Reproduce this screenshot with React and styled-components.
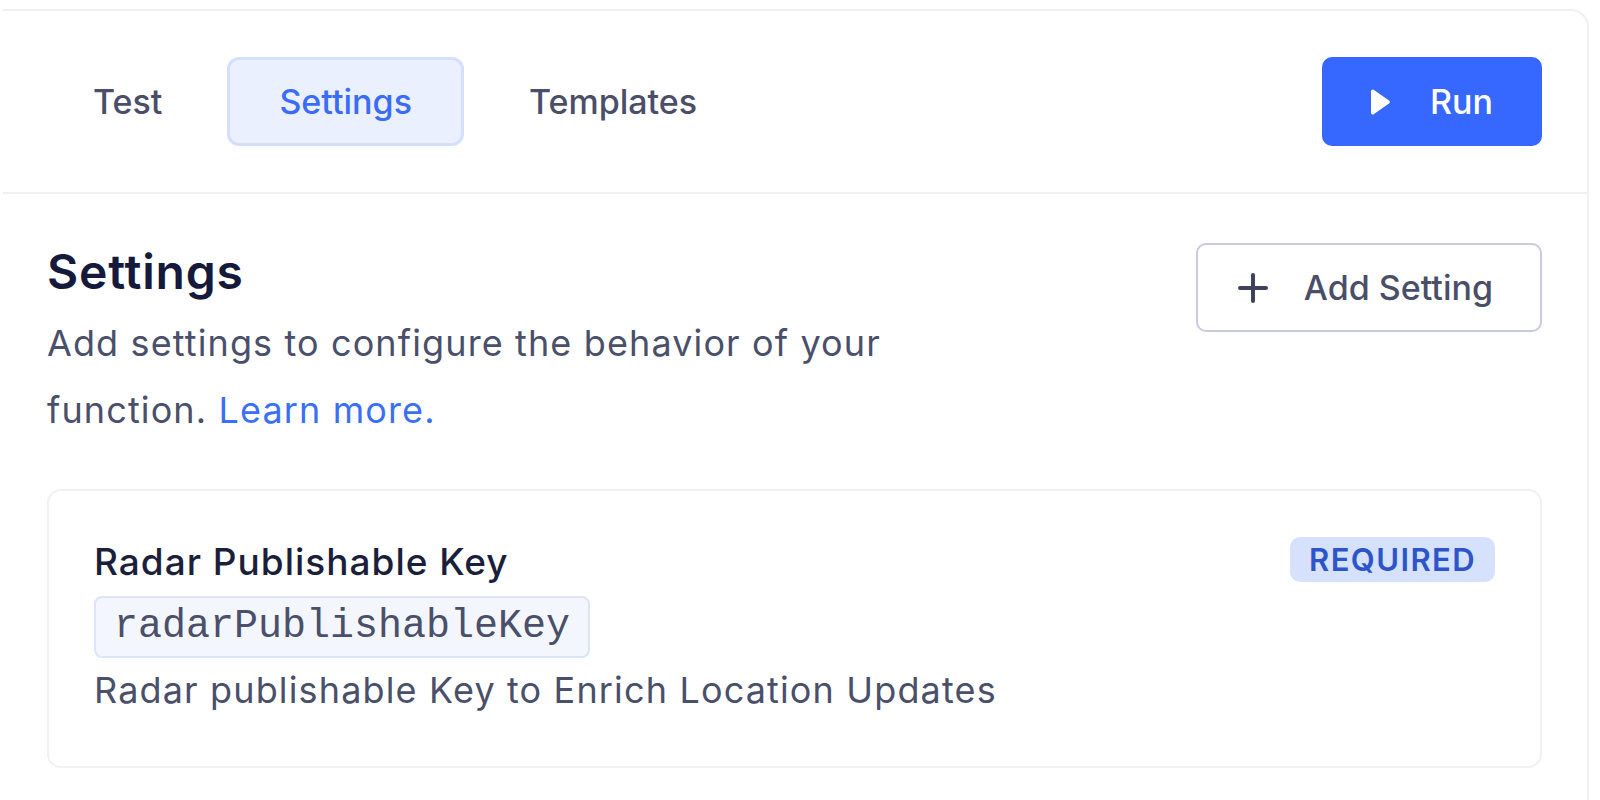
import styled, { createGlobalStyle } from "styled-components";

const GlobalStyle = createGlobalStyle`
    html, body {
        margin: 0;
        background: #fff;
        font-family: Inter, "Noto Sans", sans-serif;
        -webkit-font-smoothing: antialiased;
    }
`;

const Panel = styled.div`
    margin: 9px 11px 0 3px;
    min-height: calc(100vh - 9px);
    box-sizing: border-box;
    border-top: 2px solid #eef0f4;
    border-right: 2px solid #eef0f4;
    border-top-right-radius: 18px;
`;

const Header = styled.div`
    height: 183px;
    box-sizing: border-box;
    display: flex;
    align-items: center;
    justify-content: space-between;
    padding: 0 45px 0 38px;
    border-bottom: 2px solid #eef0f5;
`;

const Tabs = styled.div`
    display: flex;
    gap: 13px;
`;

const Tab = styled.button`
    height: 89px;
    padding: 0 49px;
    border-radius: 12px;
    border: 3px solid ${p => (p.$active ? "#d3dffd" : "transparent")};
    background: ${p => (p.$active ? "#ebf0fe" : "transparent")};
    color: ${p => (p.$active ? "#3b6cf6" : "#4b4e69")};
    font-family: inherit;
    font-size: 34px;
    font-weight: 500;
    cursor: pointer;
`;

const RunButton = styled.button`
    display: flex;
    align-items: center;
    gap: 39px;
    height: 89px;
    padding: 0 49px 0 47px;
    border: none;
    border-radius: 10px;
    background: #3668ff;
    color: #fff;
    font-family: inherit;
    font-size: 34px;
    font-weight: 500;
`;

const Content = styled.div`
    padding: 49px 45px 0 44px;
`;

const TopRow = styled.div`
    display: flex;
    justify-content: space-between;
    align-items: flex-start;
`;

const Heading = styled.h2`
    margin: 0;
    font-size: 48px;
    line-height: 58px;
    font-weight: 600;
    letter-spacing: 0.8px;
    color: #151a3d;
`;

const Desc = styled.p`
    margin: 9px 0 0;
    max-width: 880px;
    font-size: 36px;
    line-height: 67px;
    letter-spacing: 1.12px;
    color: #4a4f6a;

    a {
        color: #3b6ff5;
        text-decoration: none;
    }
`;

const OutlineButton = styled.button`
    display: flex;
    align-items: center;
    gap: 36px;
    height: 89px;
    padding: 0 47px 0 40px;
    border: 2px solid #c9cadd;
    border-radius: 10px;
    background: #fff;
    color: #4a4e68;
    font-family: inherit;
    font-size: 34px;
    font-weight: 500;
`;

const Card = styled.div`
    margin-top: 45px;
    padding: 50px 45px 55px 45px;
    border: 2px solid #f0f1f5;
    border-radius: 14px;
    display: flex;
    justify-content: space-between;
    align-items: flex-start;
`;

const CardTitle = styled.div`
    font-size: 37px;
    line-height: 42px;
    font-weight: 500;
    letter-spacing: 1px;
    color: #1b1f3b;
`;

const Code = styled.code`
    display: inline-block;
    margin-top: 13px;
    padding: 5px 18px;
    border: 2px solid #dbe4f8;
    border-radius: 8px;
    background: #f3f6fd;
    font-family: "Liberation Mono", "DejaVu Sans Mono", monospace;
    font-size: 40px;
    line-height: 48px;
    color: #4a4f6a;
`;

const CardText = styled.div`
    margin-top: 11px;
    font-size: 36px;
    line-height: 42px;
    letter-spacing: 1.15px;
    color: #4a4f6a;
`;

const Badge = styled.span`
    margin-top: -4px;
    padding: 4px 19px;
    border-radius: 10px;
    background: #d6e2fd;
    color: #2e55c8;
    font-size: 31px;
    line-height: 37px;
    font-weight: 600;
    letter-spacing: 1.4px;
`;

function PlayIcon() {
    return (
        <svg width="22" height="28" viewBox="0 0 22 28">
            <path d="M2 3.5 C2 1.5 3.6 0.8 5 1.9 L20 12.4 C21.2 13.3 21.2 14.7 20 15.6 L5 26.1 C3.6 27.2 2 26.5 2 24.5 Z" fill="#fff" />
        </svg>
    );
}

function PlusIcon() {
    return (
        <svg width="30" height="30" viewBox="0 0 30 30">
            <path d="M15 2 V28 M2 15 H28" stroke="#3d4260" strokeWidth="4" strokeLinecap="round" />
        </svg>
    );
}

export default function App() {
    return (
        <>
            <GlobalStyle />
            <Panel>
                <Header>
                    <Tabs>
                        <Tab>Test</Tab>
                        <Tab $active>Settings</Tab>
                        <Tab>Templates</Tab>
                    </Tabs>
                    <RunButton>
                        <PlayIcon />
                        Run
                    </RunButton>
                </Header>
                <Content>
                    <TopRow>
                        <div>
                            <Heading>Settings</Heading>
                            <Desc>
                                Add settings to configure the behavior of your function. <a href="#">Learn more.</a>
                            </Desc>
                        </div>
                        <OutlineButton>
                            <PlusIcon />
                            Add Setting
                        </OutlineButton>
                    </TopRow>
                    <Card>
                        <div>
                            <CardTitle>Radar Publishable Key</CardTitle>
                            <Code>radarPublishableKey</Code>
                            <CardText>Radar publishable Key to Enrich Location Updates</CardText>
                        </div>
                        <Badge>REQUIRED</Badge>
                    </Card>
                </Content>
            </Panel>
        </>
    );
}
